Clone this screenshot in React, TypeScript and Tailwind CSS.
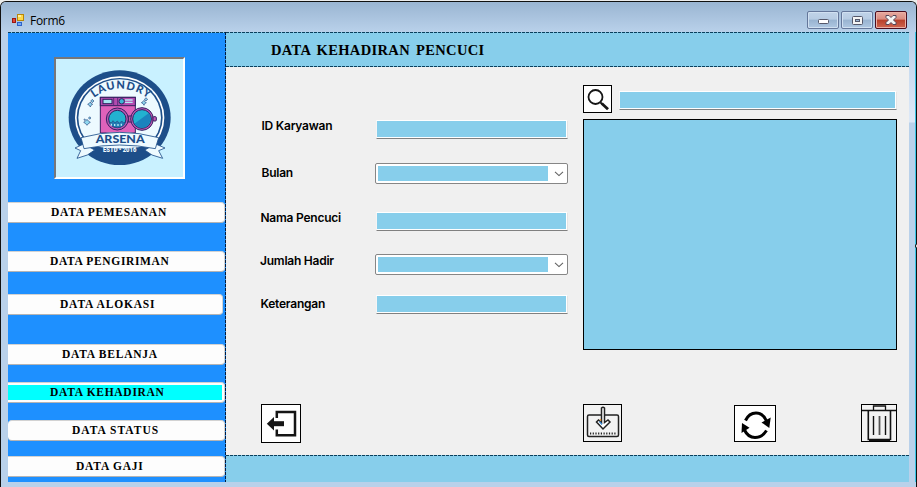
import type { ReactNode } from "react";

const dashX =
  "bg-[repeating-linear-gradient(90deg,#0b3f5c_0px,#0b3f5c_3px,#87ceeb_3px,#87ceeb_4px)]";
const dashY =
  "bg-[repeating-linear-gradient(180deg,#001c40_0px,#001c40_3px,#1e90ff_3px,#1e90ff_4px)]";

type MenuItem = { label: string; box: string; text: string };

const menu: MenuItem[] = [
  { label: "DATA PEMESANAN", box: "mt-[22px] w-[217px]", text: "ml-[43px] tracking-[0.71px]" },
  { label: "DATA PENGIRIMAN", box: "mt-[28px] w-[217px]", text: "ml-[42px] tracking-[0.65px]" },
  { label: "DATA ALOKASI", box: "mt-[22px] w-[215px]", text: "ml-[52px] tracking-[0.82px]" },
  { label: "DATA BELANJA", box: "mt-[29px] w-[217px]", text: "ml-[54px] tracking-[0.75px]" },
  { label: "DATA KEHADIRAN", box: "mt-[17px] w-[217px]", text: "ml-[42px] tracking-[0.71px]" },
  { label: "DATA STATUS", box: "mt-[17px] w-[217px] rounded-l-[4px]", text: "ml-[64px] tracking-[1px]" },
  { label: "DATA GAJI", box: "mt-[15px] w-[217px]", text: "ml-[68px] tracking-[0.78px]" },
];

function FormIcon() {
  return (
    <svg className="h-[14px] w-[14px]" viewBox="0 0 14 14">
      <rect x="6.5" y="1.5" width="6" height="6" fill="#ffd84a" stroke="#b88608" />
      <rect x="7" y="2" width="3" height="2" fill="#fff0a0" />
      <rect x="1.5" y="5.5" width="3" height="4" fill="#e0483a" stroke="#9c1710" />
      <rect x="6.5" y="9.5" width="4" height="3" fill="#74a9f5" stroke="#2d62c9" />
    </svg>
  );
}

function Spark({ x, y }: { x: number; y: number }) {
  return (
    <g transform={`translate(${x} ${y})`} fill="#8fd8ef" stroke="#274a84" strokeWidth="2">
      <path d="M0 -6 L2 -2 L7 1 L2 4 L0 9 L-3 4 L-8 1 L-3 -2 Z" />
      <path d="M6 -14 l2 3 l3 2 l-3 2 l-2 3 l-2 -3 l-3 -2 l3 -2 Z" />
    </g>
  );
}

function Logo() {
  return (
    <svg className="block h-[118px] w-[127px]" viewBox="18 21 381 354">
      <ellipse cx="209" cy="197" rx="153" ry="142" fill="#1d4e89" />
      <ellipse cx="209" cy="197" rx="134" ry="124" fill="#ffffff" />
      <ellipse cx="209" cy="197" rx="129" ry="119" fill="#1d4e89" />
      <ellipse cx="209" cy="197" rx="124" ry="115" fill="#edfaff" />
      <path d="M99 274 Q209 305 319 274 L309 290 Q275 325 209 326 Q143 325 109 290Z" fill="#1d4e89" />
      <defs>
        <path id="arc" d="M132 138 Q208 80 300 142" />
      </defs>
      <text fill="#1d4e89" className="font-['Lato'] text-[33px] font-black tracking-[3px]">
        <textPath href="#arc">LAUNDRY</textPath>
      </text>
      <Spark x={121} y={156} />
      <Spark x={282} y={151} />
      <g transform="translate(111 210)" fill="#8fd8ef" stroke="#274a84" strokeWidth="2">
        <path d="M0 -8 L4 -3 L10 1 L4 5 L0 10 L-4 5 L-10 1 L-4 -3 Z" />
        <circle cx="8" cy="-12" r="3" />
        <circle cx="-7" cy="-7" r="2" />
      </g>
      <g stroke="#31215f" strokeWidth="3">
        <rect x="151" y="136" width="105" height="107" fill="#df62ba" />
        <rect x="151" y="136" width="105" height="25" fill="#b34bb0" />
        <rect x="159" y="142" width="27" height="13" fill="#a5e5f2" />
        <circle cx="215" cy="148" r="8" fill="#3cb5d5" />
        <path d="M225 144h23M225 151h23" stroke="#b6e7f2" strokeWidth="4" />
        <path d="M191 137v22M203 137v22" strokeWidth="2" />
        <circle cx="202" cy="201" r="33" fill="#b957b5" />
        <circle cx="202" cy="201" r="26" fill="#22b1d0" />
        <path d="M177 209l7 4 5-7 6 7 7-6 6 7 7-7 6 6 6-4q-5 17-25 18-20-1-25-18z" fill="#237db5" stroke="#28477f" strokeWidth="2" />
        <path d="M184 215v6M194 216v6M204 216v6M214 215v6" stroke="#b5eaf5" strokeWidth="4" />
        <rect x="236" y="192" width="10" height="18" fill="#df62ba" />
        <circle cx="276" cy="201" r="34" fill="#c258b6" />
        <circle cx="276" cy="201" r="28" fill="#22b1d0" />
        <path d="M253 215L297 183Q310 209 288 225Q269 233 253 215Z" fill="#1b83be" stroke="none" />
        <rect x="309" y="194" width="10" height="13" rx="3" fill="#c258b6" />
      </g>
      <path d="M101 276 L75 288 L92 296 L81 319 L112 309 L134 294Z M317 276 L345 288 L326 296 L338 319 L306 309 L284 294Z" fill="#edfaff" stroke="#1d4e89" strokeWidth="2.5" />
      <path d="M93 257Q209 225 326 257L316 290Q209 268 102 290Z" fill="#edfaff" stroke="#1d4e89" strokeWidth="2.5" />
      <text x="137" y="273" fill="#1d4e89" className="font-['Lato'] text-[36px] font-black" textLength="147" lengthAdjust="spacingAndGlyphs">
        ARSENA
      </text>
      <text x="159" y="300" fill="#f1fbff" className="font-['Roboto'] text-[19px] font-black" textLength="100" lengthAdjust="spacingAndGlyphs">
        ESTD • 2016
      </text>
    </svg>
  );
}

function Caption({ children, close = false }: { children: ReactNode; close?: boolean }) {
  return (
    <div
      className={
        close
          ? "flex h-[18px] w-8 items-center justify-center rounded-[2px] border border-[#4b0d1e] bg-[linear-gradient(#e7a99f_0%,#d98c80_45%,#b8402a_50%,#cf6650_100%)] shadow-[inset_0_0_0_1px_#eab0a6]"
          : "flex h-[18px] w-8 items-center justify-center rounded-[2px] border border-[#64779a] bg-[linear-gradient(#c0d3e8_0%,#b7cce3_45%,#98b3d0_50%,#afc8e2_100%)] shadow-[inset_0_0_0_1px_#d0e0f1]"
      }
    >
      {children}
    </div>
  );
}

function TitleBar() {
  return (
    <div className="flex h-[30px] shrink-0 items-start bg-[linear-gradient(#9ab5d2,#b9d1ea)] pr-[9px] pl-[10px]">
      <div className="mt-[11px]">
        <FormIcon />
      </div>
      <div className="mt-[10px] ml-[5px] font-['Open_Sans',sans-serif] text-[12px] leading-[17px] tracking-[-0.3px] text-black">
        Form6
      </div>
      <div className="mt-[9px] ml-auto flex gap-[2px]">
        <Caption>
          <svg className="mt-[3px] h-[5px] w-[11px]" viewBox="0 0 11 5">
            <rect x=".5" y=".5" width="10" height="4" rx="1" fill="#fff" stroke="#55586a" />
          </svg>
        </Caption>
        <Caption>
          <svg className="h-[9px] w-[11px]" viewBox="0 0 11 9">
            <rect x=".5" y=".5" width="10" height="8" rx="1" fill="#f5f5f5" stroke="#55586a" />
            <rect x="3.5" y="3.5" width="4" height="2" fill="#9bb5d2" stroke="#55586a" />
          </svg>
        </Caption>
        <Caption close>
          <svg className="h-[10px] w-[12px]" viewBox="0 0 12 10">
            <path d="M1 .5h3l2 2 2-2h3v2L8.500 5 11 7.500v2H8l-2-2-2 2H1v-2L3.500 5 1 2.500z" fill="#f5f5f5" stroke="#55485a" />
          </svg>
        </Caption>
      </div>
    </div>
  );
}

function Sidebar() {
  return (
    <aside className="flex w-[217px] shrink-0 flex-col bg-[#1e90ff]">
      <div className={`h-px shrink-0 ${dashX}`} />
      <div className="mt-6 ml-[46px] h-[122px] w-[131px] shrink-0 border-2 border-t-[#77777a] border-r-white border-b-white border-l-[#77777a] bg-[#c9f1ff]">
        <Logo />
      </div>
      <nav className="mt-px">
        {menu.map((m) => {
          const active = m.label === "DATA KEHADIRAN";
          return (
            <div
              key={m.label}
              className={`flex h-[21px] items-center rounded-r-[4px] border-y border-r border-t-[#d2d2d2] border-r-[#d2d2d2] border-b-[#b4b4b4] bg-[#fdfdfd] ${m.box}`}
            >
              <div className={`flex items-center ${active ? "mr-[2px] h-[15px] grow bg-[#00ffff]" : ""}`}>
                <span
                  className={`font-['Liberation_Serif',serif] text-[11.5px] leading-[15px] font-bold whitespace-nowrap text-black ${m.text}`}
                >
                  {m.label}
                </span>
              </div>
            </div>
          );
        })}
      </nav>
    </aside>
  );
}

function TextBox({ className }: { className: string }) {
  return (
    <div className={`h-[19px] border border-t-white border-r-[#e4e4e4] border-b-[#808080] border-l-[#f5f5f5] bg-white ${className}`}>
      <div className="h-[17px] border-r border-b border-white bg-[#87ceeb]" />
    </div>
  );
}

function Combo({ className }: { className: string }) {
  return (
    <div className={`flex h-[21px] w-[193px] rounded-[2px] border border-[#868686] bg-white p-[2px] ${className}`}>
      <div className="h-[15px] w-[170px] bg-[#87ceeb]" />
      <svg className="mt-[5px] ml-[6px] h-[6px] w-[10px]" viewBox="0 0 10 6">
        <path d="M1 .8L5 4.600L9 .8" fill="none" stroke="#606060" strokeWidth="1.1" />
      </svg>
    </div>
  );
}

const labels = [
  { t: "ID Karyawan", c: "ml-[2.5px]" },
  { t: "Bulan", c: "mt-[27px] ml-[2.5px]" },
  { t: "Nama Pencuci", c: "mt-[25px] ml-[1.5px]" },
  { t: "Jumlah Hadir", c: "mt-[23px] ml-[1px]" },
  { t: "Keterangan", c: "mt-[23px] ml-[1.5px]" },
];

function Content() {
  return (
    <main className="flex grow flex-col bg-[#f0f0f0]">
      <div className="flex h-[337px] pl-[33px]">
        <div className="mt-[49px] w-[116px] shrink-0">
          {labels.map((l) => (
            <div
              key={l.t}
              className={`h-5 font-['Inter',sans-serif] text-[12px] leading-5 font-semibold tracking-[-0.24px] whitespace-nowrap text-black ${l.c}`}
            >
              {l.t}
            </div>
          ))}
        </div>
        <div className="mt-[53px] w-[193px] shrink-0">
          <TextBox className="ml-px w-[192px]" />
          <Combo className="mt-[24px]" />
          <TextBox className="mt-[28px] ml-px w-[192px]" />
          <Combo className="mt-[23px]" />
          <TextBox className="mt-[20px] ml-px w-[192px]" />
        </div>
        <div className="mt-[18px] ml-[15px] w-[314px] shrink-0">
          <div className="flex">
            <div className="h-7 w-[29px] border border-black bg-white">
              <svg className="h-[26px] w-[27px]" viewBox="0 0 27 26" fill="none" stroke="#151515">
                <circle cx="11.500" cy="11" r="7" strokeWidth="1.8" />
                <path d="M16.500 16.500L18 18" strokeWidth="1.8" />
                <path d="M17.800 17.500L24 23.300" strokeWidth="2.8" />
              </svg>
            </div>
            <TextBox className="mt-[6px] ml-[7px] w-[278px]" />
          </div>
          <div className="mt-[6px] h-[231px] w-[314px] border border-black bg-[#87ceeb]" />
        </div>
      </div>
      <div className="flex items-start pl-[35px]">
        <div className="h-[39px] w-10 border border-black bg-white">
          <svg className="h-[37px] w-[38px]" viewBox="0 0 38 37" fill="none" stroke="#151515">
            <path d="M14.800 13V7H33V30.300H14.800V24.500" strokeWidth="2.500" />
            <path d="M10 18.700H22" strokeWidth="5" />
            <path d="M4.800 18.700L12 12V25.500Z" fill="#151515" stroke="none" />
          </svg>
        </div>
        <div className="ml-[282px] h-[38px] w-[39px] border border-black bg-[#f3f3f3]">
          <svg className="h-9 w-[37px]" viewBox="0 0 37 36" fill="none" stroke="#222">
            <rect x="3.500" y="10" width="31" height="21.500" rx="1.500" strokeWidth="1.500" />
            <path d="M6 28.500H32" strokeWidth="2" strokeDasharray="1.200 1.500" />
            <path d="M17.500 3Q19 1.500 20.500 3V17.500L24 15L26 17L19 24L12.500 17L14.500 15L17.500 17.500Z" fill="#fff" strokeWidth="1.500" />
            <path d="M15.500 16.500L18 19.500" stroke="#3183cf" strokeWidth="1.300" />
            <path d="M16.500 14V16" stroke="#ec9136" strokeWidth="1.300" />
          </svg>
        </div>
        <div className="mt-px ml-[112px] h-[37px] w-[42px] border border-black bg-white">
          <svg className="h-[35px] w-10" viewBox="0 0 40 35" fill="none" stroke="#000">
            <path d="M10.500 14.500Q14 7 21 7Q28 7 31.500 15" strokeWidth="3" />
            <path d="M26.500 16.500L35.700 11.500L34.300 22Z" fill="#000" stroke="none" />
            <path d="M31.500 24.500Q27 31.500 20 31.500Q13 31.500 9.500 24" strokeWidth="3" />
            <path d="M7 17L6.500 27L14.500 21.800Z" fill="#000" stroke="none" />
          </svg>
        </div>
        <div className="ml-[85px] h-[38px] w-9 border border-black bg-[#f3f3f3]">
          <svg className="h-9 w-[34px]" viewBox="0 0 34 36" fill="none" stroke="#111">
            <path d="M0 5.500H34" strokeWidth="1.300" />
            <path d="M11.500 5V1H23.500V5" strokeWidth="1.300" />
            <path d="M6.300 6V34.500H28.500V6" strokeWidth="1.600" />
            <path d="M7 35H28" strokeWidth="2" />
            <path d="M11.500 11V30M23.500 11V30" strokeWidth="1.400" />
            <path d="M17.500 11V30" stroke="#555" strokeWidth="1.800" />
          </svg>
        </div>
      </div>
    </main>
  );
}

export default function App() {
  return (
    <div className="relative h-[487px] w-[917px] overflow-hidden bg-[#ececec]">
      <div className="flex h-[487px] flex-col pt-px">
        <div className="flex grow flex-col overflow-hidden rounded-t-[6px] border-x border-t border-[#111] bg-[#b9d1ea]">
          <TitleBar />
          <div className="flex h-[450px] grow-0 pl-[7px]">
            <Sidebar />
            <div className={`w-px shrink-0 ${dashY}`} />
            <div className="flex w-[683px] shrink-0 flex-col">
              <div className={`h-px shrink-0 ${dashX}`} />
              <header className="h-[33px] shrink-0 bg-[#87ceeb] pl-[45px]">
                <h1 className="pt-[9px] font-['Liberation_Serif',serif] text-[14.5px] leading-[17px] font-bold tracking-[0.36px] [word-spacing:2px] text-black">
                  DATA KEHADIRAN PENCUCI
                </h1>
              </header>
              <div className={`h-px shrink-0 ${dashX}`} />
              <Content />
              <div className={`h-px shrink-0 ${dashX}`} />
              <footer className="h-[26px] shrink-0 bg-[#87ceeb]" />
            </div>
            <div className="h-[450px] w-[6px] shrink-0 bg-[linear-gradient(#b9d1ea_0px,#dce8f7_85px,#dce8f7_90px,#b9d1ea_91px)]" />
            <div className="w-px shrink-0 bg-[#39c5e6]" />
          </div>
        </div>
      </div>
      <div className="absolute top-[243px] left-[915px] h-[6px] w-[6px] rounded-full border border-black bg-white" />
    </div>
  );
}
